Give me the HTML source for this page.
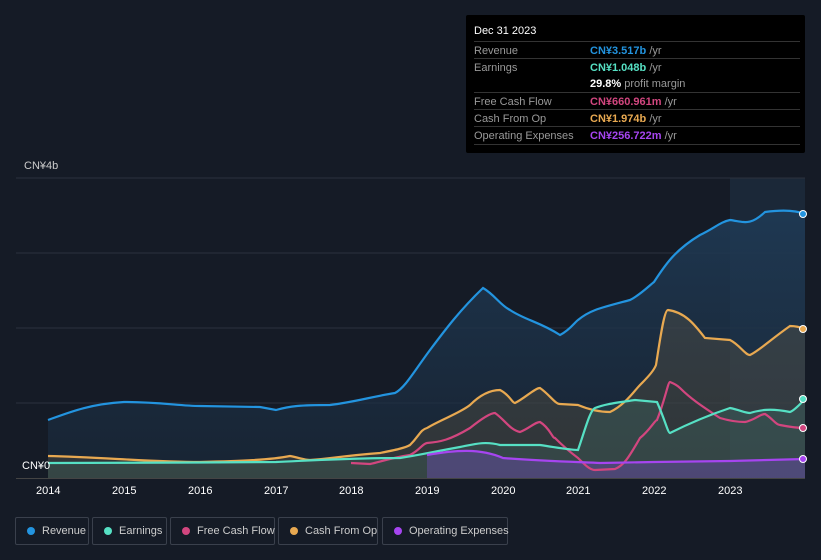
<!DOCTYPE html>
<html><head><style>
body{margin:0;width:821px;height:560px;background:#151b26;font-family:"Liberation Sans",sans-serif;overflow:hidden;position:relative}
.tt{position:absolute;left:466px;top:15px;width:339px;height:138px;background:#000;border-radius:2px}
.tt .h{color:#fff;font-size:11px;position:absolute;left:8px;top:10px}
.row{position:absolute;left:8px;width:326px;border-top:1px solid #333;height:17px;font-size:11px}
.row .l{position:absolute;left:0;top:3px;color:#999}
.row .v{position:absolute;left:116px;top:3px;font-weight:bold;white-space:nowrap}
.row .v span{color:#999;font-weight:normal}
.legend{position:absolute;top:517px;height:28px;border:1px solid #3a404c;border-radius:2px;font-size:11px;color:#ccc;box-sizing:border-box;line-height:26px;white-space:nowrap}
.legend i{position:absolute;left:11px;top:9px;width:8px;height:8px;border-radius:50%}
.legend b{font-weight:normal;position:absolute;left:26px}
.ax{position:absolute;top:485px;color:#fff;font-size:11px}
</style></head><body>
<svg width="821" height="560" style="position:absolute;left:0;top:0">
<defs><linearGradient id="g" x1="0" y1="0" x2="0" y2="1"><stop offset="0" stop-color="#1f3a55" stop-opacity=".9"/><stop offset="1" stop-color="#1a2a3c" stop-opacity=".6"/></linearGradient></defs>
<rect x="730" y="178" width="75" height="300" fill="#1b2838"/>
<g stroke="#2c323d" stroke-width="1"><line x1="16" y1="178" x2="805" y2="178"/><line x1="16" y1="253" x2="805" y2="253"/><line x1="16" y1="328" x2="805" y2="328"/><line x1="16" y1="403" x2="805" y2="403"/><line x1="16" y1="478.5" x2="805" y2="478.5" stroke="#444"/></g>
<path d="M48,420 C70,412 90,404 124,402 C160,402 180,406 200,406 L260,407 L276,410 C290,406 300,405 330,405 C355,402 370,397 395,393 C405,388 415,370 430,350 C445,330 460,310 483,288 C495,295 500,305 510,310 C525,320 540,322 560,335 C570,330 575,322 578,320 C590,310 600,308 630,300 C640,295 650,285 654,282 C665,265 675,250 700,235 C715,228 720,222 730,220 C745,222 750,226 765,212 C780,210 795,210 805,214 L805,478 L48,478Z" fill="url(#g)"/>
<path d="M48,456 C100,457 150,462 200,462 C240,461 270,460 290,456 C300,458 305,460 310,460 C330,459 340,456 380,453 C395,450 405,448 410,445 C420,435 420,430 427,428 C440,420 460,413 470,405 C480,395 490,390 500,390 C510,395 512,403 515,403 C525,398 535,388 540,388 C550,395 555,404 560,404 L578,405 C590,410 600,412 610,412 C625,405 635,390 640,385 C650,375 654,370 656,365 C660,340 664,310 668,310 C685,312 695,325 705,338 L730,340 C740,345 745,355 750,355 C760,350 770,340 790,326 C795,326 800,327 805,329 L805,478 L48,478Z" fill="#e8a951" fill-opacity=".12"/>
<path d="M427,455 C455,450 480,448 503,458 C540,461 578,462 600,463 L805,459 L805,478 L427,478Z" fill="#8a3ae8" fill-opacity=".3"/>
<path d="M48,463 C120,462 200,463 276,462 C320,460 351,458 400,458 C420,455 427,453 460,447 C475,444 485,441 500,445 L540,445 C560,448 570,450 578,450 C585,430 590,410 595,408 C605,404 615,403 635,400 L657,402 C665,420 668,433 670,433 C680,428 700,418 730,408 C740,410 745,413 750,413 C760,410 770,408 790,412 C795,410 800,404 805,399 L805,478 L48,478Z" fill="#56e0c4" fill-opacity=".1"/>
<g fill="none" stroke-width="2.2">
<path d="M48,420 C70,412 90,404 124,402 C160,402 180,406 200,406 L260,407 L276,410 C290,406 300,405 330,405 C355,402 370,397 395,393 C405,388 415,370 430,350 C445,330 460,310 483,288 C495,295 500,305 510,310 C525,320 540,322 560,335 C570,330 575,322 578,320 C590,310 600,308 630,300 C640,295 650,285 654,282 C665,265 675,250 700,235 C715,228 720,222 730,220 C745,222 750,226 765,212 C780,210 795,210 805,214" stroke="#2394df"/>
<path d="M48,456 C100,457 150,462 200,462 C240,461 270,460 290,456 C300,458 305,460 310,460 C330,459 340,456 380,453 C395,450 405,448 410,445 C420,435 420,430 427,428 C440,420 460,413 470,405 C480,395 490,390 500,390 C510,395 512,403 515,403 C525,398 535,388 540,388 C550,395 555,404 560,404 L578,405 C590,410 600,412 610,412 C625,405 635,390 640,385 C650,375 654,370 656,365 C660,340 664,310 668,310 C685,312 695,325 705,338 L730,340 C740,345 745,355 750,355 C760,350 770,340 790,326 C795,326 800,327 805,329" stroke="#e8a951"/>
<path d="M351,463 L370,464 C380,462 390,458 410,455 C420,450 422,444 427,443 C440,442 450,440 470,428 C480,420 490,413 495,413 C505,420 510,430 520,432 C530,428 535,422 540,422 C550,428 552,438 555,438 C565,448 570,452 578,458 C585,465 590,470 595,470 L615,469 C625,465 630,455 640,438 C650,430 655,420 657,420 C665,400 668,382 670,382 C675,384 678,386 680,388 C690,398 700,405 720,418 C730,421 740,422 745,422 C755,420 760,414 765,414 C772,418 776,425 780,425 C790,427 800,428 805,428" stroke="#d2467f"/>
<path d="M48,463 C120,462 200,463 276,462 C320,460 351,458 400,458 C420,455 427,453 460,447 C475,444 485,441 500,445 L540,445 C560,448 570,450 578,450 C585,430 590,410 595,408 C605,404 615,403 635,400 L657,402 C665,420 668,433 670,433 C680,428 700,418 730,408 C740,410 745,413 750,413 C760,410 770,408 790,412 C795,410 800,404 805,399" stroke="#56e0c4"/>
<path d="M427,455 C455,450 480,448 503,458 C540,461 578,462 600,463 L654,462 L730,461 L805,459" stroke="#a645f0"/>
</g>
<circle cx="803" cy="214" r="3.5" fill="#2394df" stroke="#fff"/>
<circle cx="803" cy="329" r="3.5" fill="#e8a951" stroke="#fff"/>
<circle cx="803" cy="399" r="3.5" fill="#56e0c4" stroke="#fff"/>
<circle cx="803" cy="428" r="3.5" fill="#d2467f" stroke="#fff"/>
<circle cx="803" cy="459" r="3.5" fill="#a645f0" stroke="#fff"/>
</svg>
<div style="position:absolute;left:24px;top:160px;color:#ccc;font-size:11px">CN¥4b</div>
<div style="position:absolute;left:22px;top:460px;color:#fff;font-size:11px">CN¥0</div>
<div class="ax" style="left:36px">2014</div><div class="ax" style="left:112px">2015</div><div class="ax" style="left:188px">2016</div><div class="ax" style="left:264px">2017</div><div class="ax" style="left:339px">2018</div><div class="ax" style="left:415px">2019</div><div class="ax" style="left:491px">2020</div><div class="ax" style="left:566px">2021</div><div class="ax" style="left:642px">2022</div><div class="ax" style="left:718px">2023</div>
<div class="tt">
<div class="h">Dec 31 2023</div>
<div class="row" style="top:26px"><span class="l">Revenue</span><span class="v" style="color:#2394df">CN¥3.517b <span>/yr</span></span></div>
<div class="row" style="top:43px"><span class="l">Earnings</span><span class="v" style="color:#56e0c4">CN¥1.048b <span>/yr</span></span></div>
<div class="row" style="top:60px;border-top:none"><span class="v" style="color:#fff">29.8% <span>profit margin</span></span></div>
<div class="row" style="top:77px"><span class="l">Free Cash Flow</span><span class="v" style="color:#d2467f">CN¥660.961m <span>/yr</span></span></div>
<div class="row" style="top:94px"><span class="l">Cash From Op</span><span class="v" style="color:#e8a951">CN¥1.974b <span>/yr</span></span></div>
<div class="row" style="top:111px;border-bottom:1px solid #333"><span class="l">Operating Expenses</span><span class="v" style="color:#a645f0">CN¥256.722m <span>/yr</span></span></div>
</div>
<div class="legend" style="left:15px;width:74px"><i style="background:#2394df"></i><b>Revenue</b></div>
<div class="legend" style="left:92px;width:75px"><i style="background:#56e0c4"></i><b>Earnings</b></div>
<div class="legend" style="left:170px;width:105px"><i style="background:#d2467f"></i><b>Free Cash Flow</b></div>
<div class="legend" style="left:278px;width:100px"><i style="background:#e8a951"></i><b>Cash From Op</b></div>
<div class="legend" style="left:382px;width:126px"><i style="background:#a645f0"></i><b>Operating Expenses</b></div>
</body></html>
